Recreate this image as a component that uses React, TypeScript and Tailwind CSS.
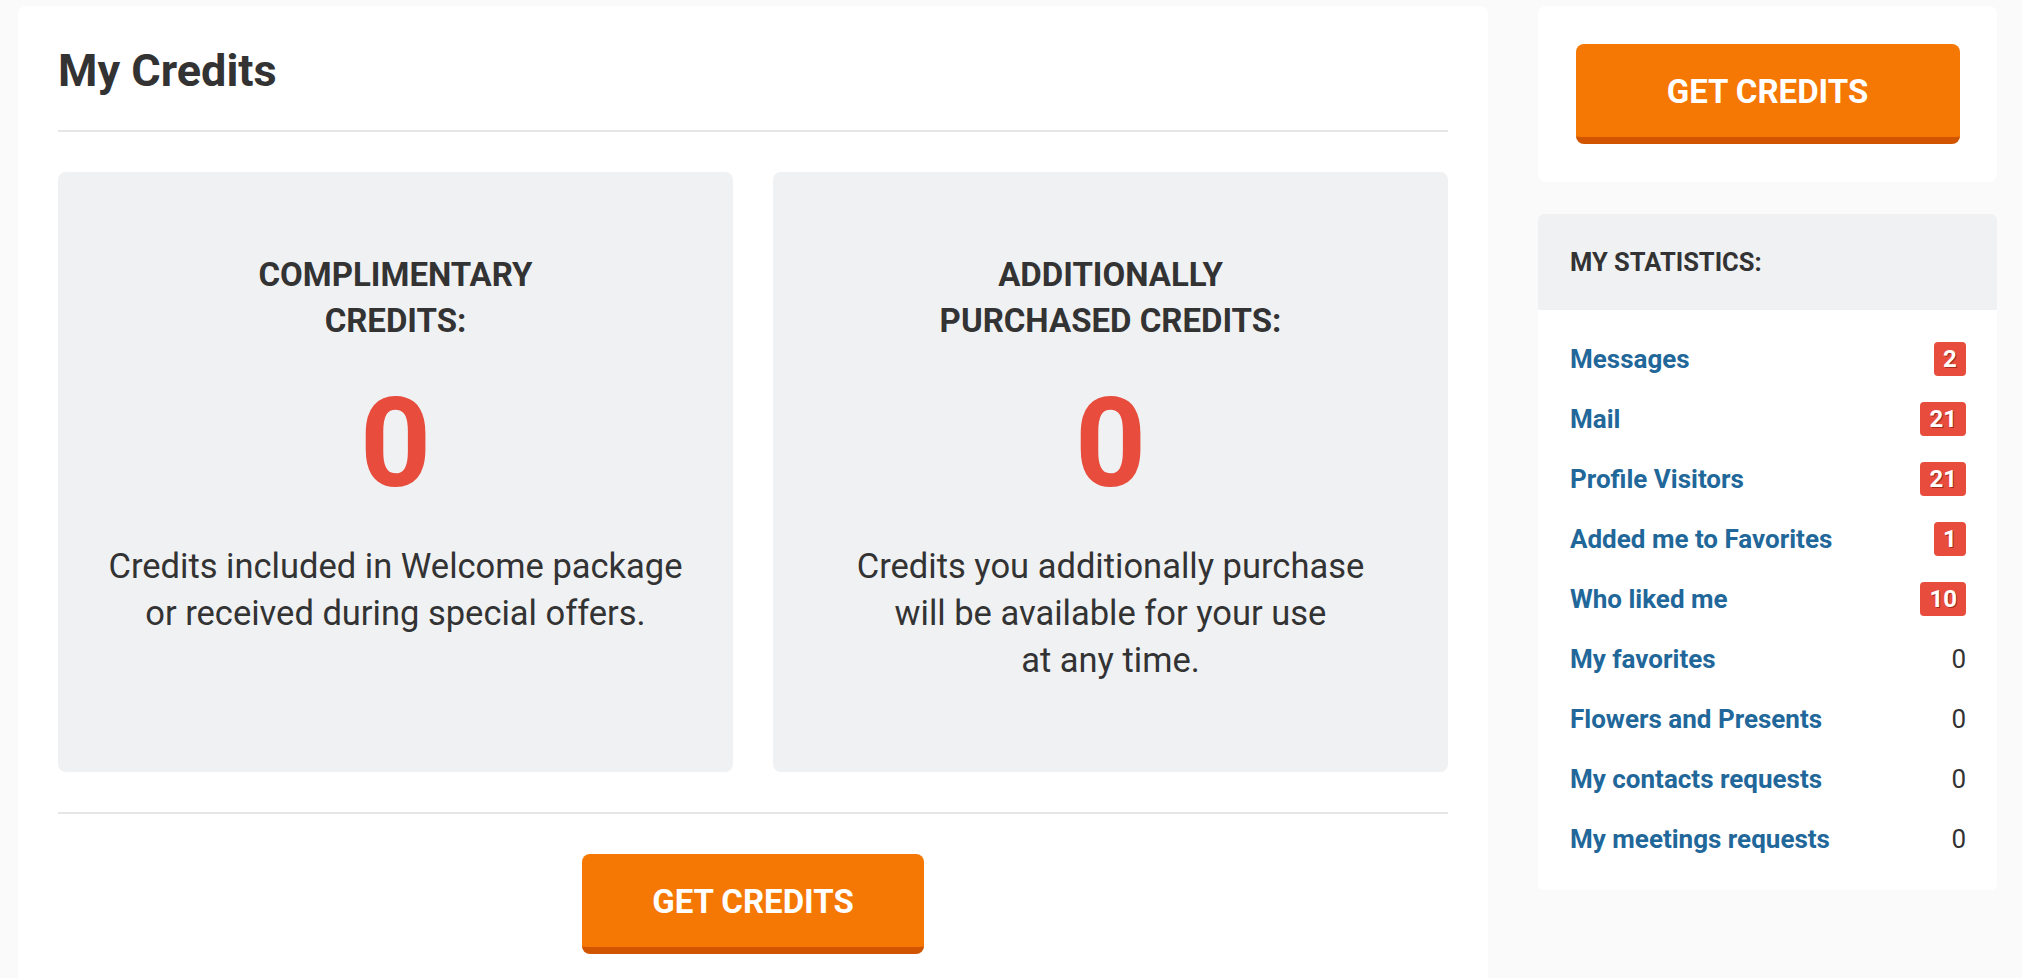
import React from "react";

type Stat = { label: string; count: number; badge?: boolean };

const stats: Stat[] = [
  { label: "Messages", count: 2, badge: true },
  { label: "Mail", count: 21, badge: true },
  { label: "Profile Visitors", count: 21, badge: true },
  { label: "Added me to Favorites", count: 1, badge: true },
  { label: "Who liked me", count: 10, badge: true },
  { label: "My favorites", count: 0 },
  { label: "Flowers and Presents", count: 0 },
  { label: "My contacts requests", count: 0 },
  { label: "My meetings requests", count: 0 },
];

function GetCreditsButton({ className = "" }: { className?: string }) {
  return (
    <button
      className={`h-[100px] rounded-lg border-b-[7px] border-[#d15400] bg-[#f57804] pt-[2px] text-[33px] font-bold text-white ${className}`}
    >
      GET CREDITS
    </button>
  );
}

function CreditCard({ title, text }: { title: React.ReactNode; text: React.ReactNode }) {
  return (
    <div className="h-[600px] rounded-lg bg-[#f0f1f3] pt-[80px] text-center">
      <h3 className="text-[33px] font-bold leading-[46px] text-[#333]">{title}</h3>
      <div className="mt-[38px] text-[124px] font-bold leading-[124px] text-[#e74c3c]">0</div>
      <p className="mt-[37px] text-[34.5px] leading-[47px] text-[#333]">{text}</p>
    </div>
  );
}

export default function App() {
  return (
    <div className="flex min-h-screen gap-[50px] bg-[#fafafa] pl-[18px] pt-[6px] font-[Roboto,sans-serif]">
      {/* Main content */}
      <main className="w-[1470px] shrink-0 rounded-lg bg-white px-[40px] pb-[40px] pt-[38px]">
        <h1 className="text-[45px] font-bold leading-[54px] text-[#333]">My Credits</h1>
        <div className="mt-[32px] h-[2px] bg-[#e6e6e6]" />

        <div className="mt-[40px] grid grid-cols-2 gap-[40px]">
          <CreditCard
            title={
              <>
                COMPLIMENTARY
                <br />
                CREDITS:
              </>
            }
            text={
              <>
                Credits included in Welcome package
                <br />
                or received during special offers.
              </>
            }
          />
          <CreditCard
            title={
              <>
                ADDITIONALLY
                <br />
                PURCHASED CREDITS:
              </>
            }
            text={
              <>
                Credits you additionally purchase
                <br />
                will be available for your use
                <br />
                at any time.
              </>
            }
          />
        </div>

        <div className="mt-[40px] h-[2px] bg-[#e6e6e6]" />
        <div className="mt-[40px] flex justify-center">
          <GetCreditsButton className="w-[342px]" />
        </div>
      </main>

      {/* Sidebar */}
      <aside className="w-[459px] shrink-0">
        <div className="flex justify-center rounded-lg bg-white py-[38px]">
          <GetCreditsButton className="w-[384px]" />
        </div>

        <div className="mt-[32px] overflow-hidden rounded-md bg-white">
          <div className="flex h-[96px] items-center bg-[#f0f1f3] px-[32px]">
            <h2 className="text-[25.5px] font-bold leading-[30px] text-[#333]">MY STATISTICS:</h2>
          </div>
          <ul className="pb-[21px] pl-[32px] pr-[31px] pt-[19px]">
            {stats.map((s) => (
              <li key={s.label} className="flex h-[60px] items-center justify-between">
                <a href="#" className="text-[26px] font-bold text-[#21679a]">
                  {s.label}
                </a>
                {s.badge ? (
                  <span className="flex h-[34px] min-w-[32px] items-center justify-center rounded bg-[#e74c3c] px-[9px] text-[24px] font-bold text-white [text-shadow:1px_1px_0_#a52a1c]">
                    {s.count}
                  </span>
                ) : (
                  <span className="text-[26px] text-[#333]">{s.count}</span>
                )}
              </li>
            ))}
          </ul>
        </div>
      </aside>
    </div>
  );
}
